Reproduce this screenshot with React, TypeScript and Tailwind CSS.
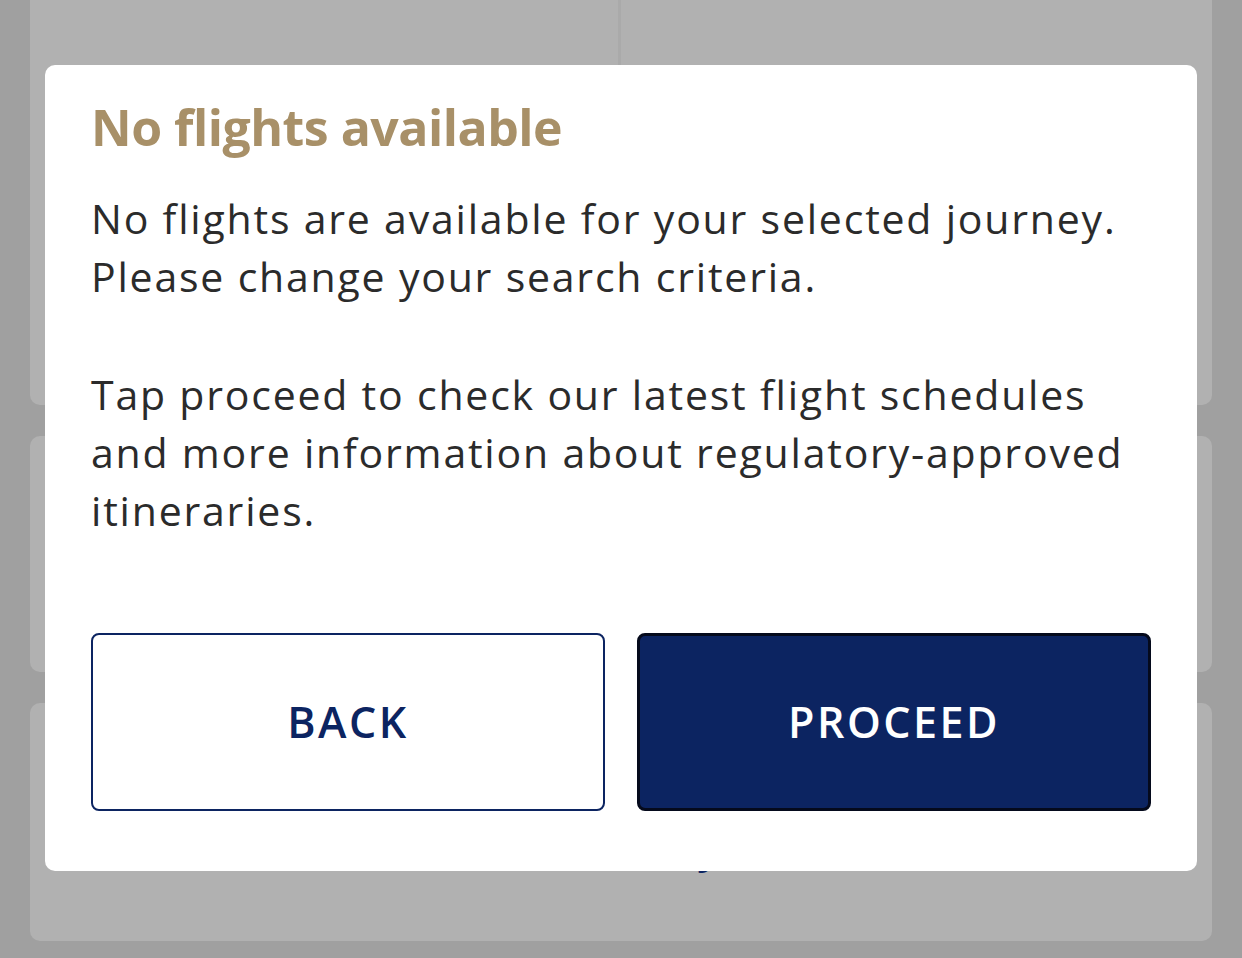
export default function App() {
  return (
    <div className="relative h-[958px] w-[1242px] overflow-hidden bg-[#a0a0a0] px-[30px] font-['Open_Sans',sans-serif]">
      {/* cards behind the dimmed overlay */}
      <div className="flex flex-col gap-[31px]">
        <div className="grid h-[405px] grid-cols-2 rounded-b-[10px] bg-[#b1b1b1]">
          <div className="border-r-[3px] border-[#aaaaaa]" />
          <div />
        </div>
        <div className="h-[236px] rounded-[10px] bg-[#b1b1b1]" />
        <div className="flex h-[238px] justify-center rounded-[10px] bg-[#b1b1b1] pl-[60px] pt-[122px]">
          <span className="text-[40px] font-bold leading-[48px] text-[#0c2461]">Modify</span>
        </div>
      </div>

      {/* modal */}
      <div className="absolute left-[45px] top-[65px] flex h-[806px] w-[1152px] flex-col rounded-[10px] bg-white px-[46px] pt-[30px]">
        <h1 className="text-[50px] font-bold leading-[64px] tracking-[-0.5px] text-[#a89068]">No flights available</h1>
        <div className="mt-[30px] text-[41px] leading-[58px] tracking-[1.8px] text-[#2b2b2b]">
          <p>No flights are available for your selected journey.</p>
          <p>Please change your search criteria.</p>
          <p className="mt-[60px]">Tap proceed to check our latest flight schedules and more information about regulatory-approved itineraries.</p>
        </div>
        <div className="mt-auto mb-[60px] grid grid-cols-2 gap-[32px]">
          <button className="flex h-[178px] items-center justify-center rounded-[8px] border-2 border-[#0c2461] bg-white text-[43px] font-semibold tracking-[2.5px] text-[#0c2461]">
            BACK
          </button>
          <button className="flex h-[178px] items-center justify-center rounded-[8px] border-[3px] border-[#050a1c] bg-[#0c2461] text-[43px] font-semibold tracking-[2.5px] text-white">
            PROCEED
          </button>
        </div>
      </div>
    </div>
  );
}
